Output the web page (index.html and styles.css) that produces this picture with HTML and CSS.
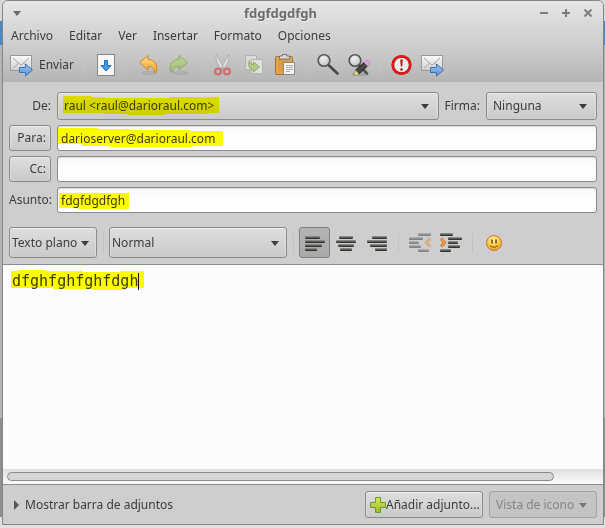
FILE: index.html
```html
<!DOCTYPE html>
<html lang="es">
<head>
<meta charset="utf-8">
<title>fdgfdgdfgh</title>
<link rel="stylesheet" href="styles.css">
</head>
<body>
<svg class="defs" aria-hidden="true">
  <defs>
    <linearGradient id="paper" x1="0" y1="0" x2="0" y2="1"><stop offset="0" stop-color="#fafafa"/><stop offset="1" stop-color="#cfcfcf"/></linearGradient>
    <linearGradient id="blue" x1="0" y1="0" x2="0" y2="1"><stop offset="0" stop-color="#9fc4ea"/><stop offset="1" stop-color="#5b95d2"/></linearGradient>
    <linearGradient id="gold" x1="0" y1="0" x2="0" y2="1"><stop offset="0" stop-color="#ffe08a"/><stop offset="1" stop-color="#f0a028"/></linearGradient>
    <linearGradient id="green" x1="0" y1="0" x2="0" y2="1"><stop offset="0" stop-color="#c3d69c"/><stop offset="1" stop-color="#9dba70"/></linearGradient>
    <linearGradient id="lime" x1="0" y1="0" x2="0" y2="1"><stop offset="0" stop-color="#d9e84c"/><stop offset="1" stop-color="#9cbc28"/></linearGradient>
    <linearGradient id="bar" x1="0" y1="0" x2="0" y2="1"><stop offset="0" stop-color="#9a9c97"/><stop offset="1" stop-color="#1c1e1c"/></linearGradient>
    <radialGradient id="face" cx=".45" cy=".3" r=".75"><stop offset="0" stop-color="#fff6a0"/><stop offset=".6" stop-color="#fbc43c"/><stop offset="1" stop-color="#ee9030"/></radialGradient>
    <radialGradient id="lens" cx=".4" cy=".3" r=".8"><stop offset="0" stop-color="#f2f2f2"/><stop offset="1" stop-color="#bdbdbd"/></radialGradient>
    <symbol id="mail" viewBox="0 0 24 24">
      <rect x=".5" y="2.500" width="21" height="15" fill="url(#paper)" stroke="#999"/>
      <path d="M3 5l6.500 6q1.500 1.500 3 0L19 5M3 15.500l5.500-5.500M19 15.500l-5.500-5.500" fill="none" stroke="#a6a6a6"/>
      <path d="M9.500 14.500h6v-3.500l7 6-7 6v-3.500h-6z" fill="url(#blue)" stroke="#3874b8"/>
    </symbol>
  </defs>
</svg>
<main class="window">
  <header class="chrome">
    <div class="titlebar">
      <button class="win-btn" aria-label="Menú de la ventana"><svg width="8" height="5"><path d="M0 0h8L4 5z" fill="#6a6a6a"/></svg></button>
      <h1>fdgfdgdfgh</h1>
      <div class="win-controls">
        <button class="win-btn" aria-label="Minimizar"><svg width="8" height="8"><path d="M0 4h8" stroke="#7c7c7c" stroke-width="2"/></svg></button>
        <button class="win-btn" aria-label="Maximizar"><svg width="8" height="8"><path d="M0 4h8M4 0v8" stroke="#7c7c7c" stroke-width="2"/></svg></button>
        <button class="win-btn" aria-label="Cerrar"><svg width="8" height="8"><path d="M.5.5l7 7M7.500.5l-7 7" stroke="#7c7c7c" stroke-width="2"/></svg></button>
      </div>
    </div>
    <nav class="menubar">
      <button>Archivo</button><button>Editar</button><button>Ver</button><button>Insertar</button><button>Formato</button><button>Opciones</button>
    </nav>
    <div class="toolbar" role="toolbar" aria-label="Mensaje">
      <button class="tool send"><svg class="icon"><use href="#mail"/></svg>Enviar</button>
      <span class="sep"></span>
      <button class="tool" aria-label="Guardar borrador"><svg class="icon" viewBox="0 0 24 24">
        <rect x="3.500" y="1.500" width="17" height="21" fill="#f7f7f7" stroke="#888"/>
        <path d="M10.500 7.500h3v5h3.500L12 18l-5-5.500h3.500z" fill="#3a9be8" stroke="#2a6cb4"/></svg></button>
      <span class="sep"></span>
      <button class="tool" aria-label="Deshacer"><svg class="icon" viewBox="0 0 24 24">
        <ellipse cx="12" cy="20" rx="8" ry="2" fill="#000" opacity=".08"/>
        <path d="M2.500 9.500L11 2.500v4c7 0 10 5 8.500 12-.3 1-1.500 1-2.500.5 0-4-2-5.500-6-5.500v3.500z" fill="url(#gold)" stroke="#cb8a22"/></svg></button>
      <button class="tool" aria-label="Rehacer"><svg class="icon" viewBox="0 0 24 24">
        <ellipse cx="13" cy="20" rx="8" ry="2" fill="#000" opacity=".08"/>
        <path d="M19.500 9.500L11 2.500v4c-7 0-10.500 5-8.500 12 .3 1 1.500 1 2.500.5 0-4 2-5.500 6-5.500v3.500z" fill="url(#green)" stroke="#8fa968"/></svg></button>
      <span class="sep"></span>
      <button class="tool" aria-label="Cortar"><svg class="icon" viewBox="0 0 24 24">
        <path d="M5 1.500l8 14-2 1.500C6.500 10 4.500 7 5 1.500zM18 1.500l-8 14 2 1.500c4.500-7 6.500-10 6-15.500z" fill="#e6e6e6" stroke="#a8a8a8" stroke-width=".8"/>
        <ellipse cx="7" cy="18.500" rx="3" ry="2.800" fill="none" stroke="#cd7070" stroke-width="2.200"/>
        <ellipse cx="16" cy="18.500" rx="3" ry="2.800" fill="none" stroke="#cd7070" stroke-width="2.200"/></svg></button>
      <button class="tool" aria-label="Copiar"><svg class="icon" viewBox="0 0 24 24">
        <path d="M3.500 2.500h11v14h-11z" fill="#dadada" stroke="#b4b4b4"/><path d="M9.500 6.500h11v14h-11z" fill="#e0e0e0" stroke="#b4b4b4"/>
        <path d="M7.500 7.500c0 3 2 4 4 4v-2.500l6 5-6 5v-2.500c-4.500 0-6-4-4-9z" fill="#b4ca83" stroke="#8fa968"/></svg></button>
      <button class="tool" aria-label="Pegar"><svg class="icon" viewBox="0 0 24 24">
        <rect x="2.500" y="3.500" width="17" height="18" rx="1" fill="#e3a552" stroke="#a5702c"/><rect x="5" y="6" width="12" height="12" fill="#d99b48"/>
        <path d="M6.500 6v-3h3v-1.500h4v1.500h3v3z" fill="#ddd" stroke="#777"/>
        <path d="M10.500 9.500h11v12h-11z" fill="#f5f5f2" stroke="#888"/><path d="M13 12.500h7M13 14.500h7M13 16.500h7M13 18.500h4" stroke="#aaa"/></svg></button>
      <span class="sep"></span>
      <button class="tool" aria-label="Buscar"><svg class="icon" viewBox="0 0 24 24">
        <path d="M13 12.500l8.500 8" stroke="#484848" stroke-width="2.600" stroke-linecap="round"/><circle cx="8" cy="7.500" r="5.800" fill="url(#lens)" stroke="#555" stroke-width="1.600"/></svg></button>
      <button class="tool" aria-label="Reemplazar"><svg class="icon" viewBox="0 0 24 24">
        <ellipse cx="13" cy="21" rx="9" ry="2" fill="#000" opacity=".12"/>
        <path d="M12 12l8 8.500" stroke="#555" stroke-width="2.600" stroke-linecap="round"/><circle cx="8" cy="7.500" r="5.800" fill="url(#lens)" stroke="#555" stroke-width="1.600"/>
        <path d="M8.500 17L17 9.500l3.500 3.500-8.500 8z" fill="#484848" stroke="#222"/><path d="M8.500 17l3.500 4-5 2z" fill="#f0e28a" stroke="#8a7f40" stroke-width=".6"/>
        <path d="M17 9.500l2-2q4 0 3.800 3.500l-2.300 2z" fill="#e9a0dc" stroke="#b070a8" stroke-width=".6"/></svg></button>
      <span class="sep"></span>
      <button class="tool" aria-label="Prioridad alta"><svg class="icon" viewBox="0 0 24 24">
        <circle cx="11.500" cy="12" r="8.700" fill="#ececec" stroke="#b40808" stroke-width="2.800"/><circle cx="11.500" cy="12" r="8.900" fill="none" stroke="#ea2020" stroke-width="1.600"/>
        <path d="M10.200 6.500h2.600l-.6 7h-1.400z" fill="#b81818"/><circle cx="11.500" cy="16.500" r="1.300" fill="#b81818"/></svg></button>
      <button class="tool" aria-label="Acuse de recibo"><svg class="icon"><use href="#mail"/></svg></button>
    </div>
  </header>

  <form class="headers">
    <label for="from">De:</label>
    <div class="from-row">
      <div class="picker"><select id="from"><option>raul &lt;raul@darioraul.com&gt;</option></select>
        <svg class="mark mark-from" viewBox="0 0 156 20" preserveAspectRatio="none"><path d="M0 0h29v1h13v1h64V1h50v16h-12v1h-42v1H64v-1H40v-1H0z"/></svg></div>
      <label for="sign">Firma:</label>
      <div class="picker sign"><select id="sign"><option>Ninguna</option></select></div>
    </div>
    <button type="button" class="raised">Para:</button>
    <div class="field"><input aria-label="Para" value="darioserver@darioraul.com">
      <svg class="mark mark-to" viewBox="0 0 165 19" preserveAspectRatio="none"><path d="M0 0h40v1h32v1h60v1h33v15h-30v1H52v-1H24v-2H0z"/></svg></div>
    <button type="button" class="raised">Cc:</button>
    <div class="field"><input aria-label="Cc"></div>
    <label for="subject">Asunto:</label>
    <div class="field"><input id="subject" value="fdgfdgdfgh">
      <svg class="mark mark-subject" viewBox="0 0 70 16" preserveAspectRatio="none"><path d="M0 0h70v16H19v-1H0z"/></svg></div>
  </form>

  <div class="format" role="toolbar" aria-label="Formato">
    <div class="picker mode"><select aria-label="Modo"><option>Texto plano</option></select></div>
    <span class="sep"></span>
    <div class="picker style"><select aria-label="Estilo"><option>Normal</option></select></div>
    <span class="sep"></span>
    <button class="tool pressed" aria-label="Izquierda" aria-pressed="true"><svg class="icon" viewBox="0 0 24 24" fill="url(#bar)"><rect x="2" y="5" width="15" height="3" rx="1"/><rect x="2" y="9" width="20" height="3" rx="1"/><rect x="2" y="13" width="17" height="3" rx="1"/><rect x="2" y="17" width="12" height="3" rx="1"/></svg></button>
    <button class="tool" aria-label="Centro"><svg class="icon" viewBox="0 0 24 24" fill="url(#bar)"><rect x="5" y="5" width="14" height="3" rx="1"/><rect x="2" y="9" width="20" height="3" rx="1"/><rect x="4" y="13" width="16" height="3" rx="1"/><rect x="6" y="17" width="12" height="3" rx="1"/></svg></button>
    <button class="tool" aria-label="Derecha"><svg class="icon" viewBox="0 0 24 24" fill="url(#bar)"><rect x="7" y="5" width="15" height="3" rx="1"/><rect x="2" y="9" width="20" height="3" rx="1"/><rect x="5" y="13" width="17" height="3" rx="1"/><rect x="10" y="17" width="12" height="3" rx="1"/></svg></button>
    <span class="sep"></span>
    <button class="tool dim" aria-label="Reducir sangría"><svg class="icon" viewBox="0 0 24 24" fill="url(#bar)"><rect x="10" y="2" width="13" height="3" rx="1"/><rect x="1" y="6" width="14" height="3" rx="1"/><rect x="1" y="10" width="10" height="3" rx="1"/><rect x="1" y="14" width="12" height="3" rx="1"/><rect x="10" y="18" width="11" height="3" rx="1"/><path d="M22 7.500L18.500 11.500 22 15.500" fill="none" stroke="#d8741c" stroke-width="3"/><path d="M22 7.500L18.500 11.500 22 15.500" fill="none" stroke="#fcc890"/></svg></button>
    <button class="tool" aria-label="Aumentar sangría"><svg class="icon" viewBox="0 0 24 24" fill="url(#bar)"><rect x="1" y="2" width="13" height="3" rx="1"/><rect x="9" y="6" width="14" height="3" rx="1"/><rect x="9" y="10" width="10" height="3" rx="1"/><rect x="9" y="14" width="12" height="3" rx="1"/><rect x="1" y="18" width="11" height="3" rx="1"/><path d="M2 7.500L5.500 11.500 2 15.500" fill="none" stroke="#d8741c" stroke-width="3"/><path d="M2 7.500L5.500 11.500 2 15.500" fill="none" stroke="#fcc890"/></svg></button>
    <span class="sep"></span>
    <button class="tool" aria-label="Insertar emoticono"><svg class="icon" viewBox="0 0 24 24"><circle cx="12" cy="12" r="7.500" fill="url(#face)" stroke="#d07838"/><path d="M10 8.500v4M14 8.500v4" stroke="#7a5010" stroke-width="1.600"/><path d="M8 14.500q4 3.500 8 0" fill="none" stroke="#7a5010"/></svg></button>
  </div>

  <section class="editor">
    <textarea aria-label="Mensaje" spellcheck="false">dfghfghfghfdgh</textarea>
    <svg class="mark mark-body" viewBox="0 0 133 20" preserveAspectRatio="none"><path d="M0 1h7V0h28v1h37v1h37V1h24v17h-18v2H82v-1H42v-1H0z"/></svg>
    <span class="caret"></span>
    <div class="scroll"><div class="thumb"></div></div>
  </section>

  <footer class="attachments">
    <button class="expander"><svg width="5" height="10"><path d="M0 0l5 5-5 5z" fill="#555"/></svg>Mostrar barra de adjuntos</button>
    <button class="raised add"><svg width="16" height="16" viewBox="0 0 16 16"><path d="M5.500.5h5v5h5v5h-5v5h-5v-5h-5v-5h5z" fill="url(#lime)" stroke="#6a9a2c"/></svg>Añadir adjunto...</button>
    <div class="picker view"><select aria-label="Vista" disabled><option>Vista de icono</option></select></div>
  </footer>
</main>
</body>
</html>
```
FILE: styles.css
```css
* { box-sizing: border-box; }

body {
  margin: 0;
  height: 100vh;
  padding: 0 1px 3px 2px;
  background: linear-gradient(#d8d8d8 0 21px, #4a86c4 21px 45px, #b4b4b4 45px 418px, #8e8e8e 418px 517px, #e2e2e2 517px);
  font: 12px/16px "Noto Sans", "Open Sans", sans-serif;
  color: #3c3c3c;
}

button, input, select, textarea { font: inherit; color: inherit; margin: 0; }
button { background: none; border: 0; padding: 0; }
.defs { position: absolute; width: 0; height: 0; }

.window {
  height: 100%;
  display: flex;
  flex-direction: column;
  border: 1px solid #858585;
  border-radius: 6px 6px 0 0;
  background: #cecece;
  overflow: hidden;
}

.chrome {
  background: linear-gradient(#e6e6e6, #cdcdcd 44px, #cdcdcd 46px, #b5b5b5);
}

.titlebar {
  display: grid;
  grid-template-columns: auto 1fr auto;
  align-items: center;
  height: 24px;
  padding: 0 11px 0 10px;
}
.titlebar h1 { margin: 0; font-size: 13px; text-align: center; color: #6c6c6c; text-shadow: 0 1px #f0f0f0; }
.win-btn { display: flex; justify-content: center; width: 8px; }
.win-controls { display: flex; justify-content: flex-end; gap: 14px; }

.menubar { display: flex; gap: 16px; height: 22px; padding: 0 8px; }

.toolbar { display: flex; align-items: center; height: 35px; padding-left: 4px; }
.tool { display: flex; align-items: center; justify-content: center; width: 31px; height: 31px; }
.tool.send { justify-content: flex-start; gap: 5px; width: 71px; padding-left: 3px; }
.icon { width: 24px; height: 24px; flex: none; }
.sep { flex: none; width: 12px; height: 20px; background: linear-gradient(#c2c2c2, #c2c2c2) 6px 0 / 1px 100% no-repeat; }

.headers {
  display: grid;
  grid-template-columns: 42px 1fr;
  gap: 5px 6px;
  padding: 10px 6px 14px;
  align-items: center;
}
.headers > label { text-align: right; white-space: nowrap; }
.from-row { display: flex; align-items: center; gap: 6px; }
.from-row .picker:first-child { flex: 1; }
.sign { width: 111px; }

.raised, .picker select {
  border: 1px solid #8b8b8b;
  border-radius: 3px;
  background: linear-gradient(#dedede, #cacaca);
  box-shadow: inset 0 1px #ececec, inset 1px 0 #dcdcdc, inset -1px 0 #dcdcdc;
}
.headers .raised { height: 26px; padding-right: 4px; text-align: right; }

.picker { position: relative; }
.picker select { display: block; appearance: none; width: 100%; height: 28px; padding: 0 20px 0 6px; opacity: 1; }
.picker::after {
  content: "";
  position: absolute;
  right: 10px;
  top: calc(50% - 2px);
  border: 4px solid transparent;
  border-top: 5px solid #3c3c3c;
  border-bottom: 0;
  pointer-events: none;
}

.field { position: relative; }
.field input {
  display: block;
  width: 100%;
  height: 26px;
  padding: 0 3px;
  border: 1px solid #8b8b8b;
  border-radius: 3px;
  background: linear-gradient(#f6f6f6, #fdfdfd 8px);
  box-shadow: inset 0 1px #dcdcdc;
}

.mark { position: absolute; fill: #ff0; mix-blend-mode: multiply; pointer-events: none; }
.mark-from { left: 6px; top: 4px; width: 156px; height: 20px; }
.mark-to { left: 1px; top: 3px; width: 165px; height: 19px; }
.mark-subject { left: 2px; top: 6px; width: 70px; height: 16px; }
.mark-body { left: 8px; top: 5px; width: 133px; height: 20px; }

.format { display: flex; align-items: center; padding: 0 6px 6px; }
.format .picker select { height: 31px; padding: 0 0 0 2px; }
.format .picker::after { right: 8px; }
.mode { width: 88px; }
.style { width: 178px; }
.pressed { border: 1px solid #808080; border-radius: 3px; background: linear-gradient(#b4b4b4, #a9a9a9); }
.dim { opacity: .5; }

.editor {
  position: relative;
  flex: 1;
  min-height: 0;
  display: flex;
  flex-direction: column;
  border: solid #8b8b8b;
  border-width: 1px 0;
  background: #fcfcfc;
}
.editor textarea {
  flex: 1;
  border: 0;
  padding: 6px 9px;
  background: none;
  resize: none;
  outline: 0;
  font: 15px/20px "DejaVu Sans Mono", monospace;
}
.caret { position: absolute; left: 135px; top: 8px; width: 1px; height: 17px; background: #111; }
.scroll { height: 15px; padding: 3px 49px 2px 4px; background: linear-gradient(#e0e0e0, #fafafa); }
.thumb { height: 9px; border: 1px solid #8b8b8b; border-radius: 5px; background: #d6d6d6; }

.attachments { display: flex; align-items: center; gap: 6px; height: 39px; padding: 0 6px; }
.expander { display: flex; align-items: center; gap: 6px; margin-right: auto; padding-left: 5px; }
.add { display: flex; align-items: center; height: 27px; width: 118px; padding-left: 4px; white-space: nowrap; }
.view { width: 108px; }
.view select { height: 27px; color: #858585; border-color: #a2a2a2; background: #c4c4c4; box-shadow: none; }
.view::after { border-top-color: #777; }
```
